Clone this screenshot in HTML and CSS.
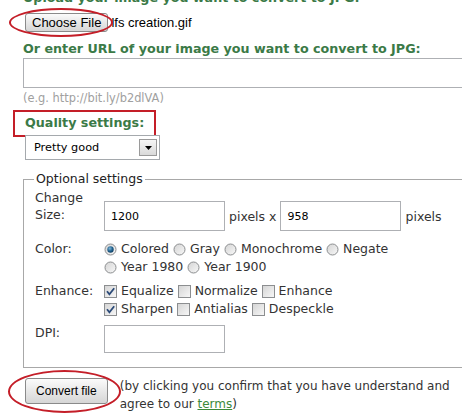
FILE: index.html
```html
<!DOCTYPE html>
<html>
<head>
<meta charset="utf-8">
<title>Convert to JPG</title>
<link rel="stylesheet" href="styles.css">
</head>
<body>
<svg class="defs" width="0" height="0" aria-hidden="true">
  <defs>
    <linearGradient id="gBox" x1="0" y1="0" x2="1" y2="1">
      <stop offset="0" stop-color="#d4d4d4"/>
      <stop offset="1" stop-color="#f8f8f8"/>
    </linearGradient>
    <radialGradient id="gDot" cx="0.4" cy="0.35" r="0.7">
      <stop offset="0" stop-color="#7fb6d8"/>
      <stop offset="0.6" stop-color="#1f5f8c"/>
      <stop offset="1" stop-color="#0f3b5c"/>
    </radialGradient>
  </defs>
</svg>
<div class="page">
  <h2 class="heading heading-upload">Upload your image you want to convert to JPG:</h2>
  <div class="file-row">
    <button class="btn btn-choose" type="button">Choose File</button><span class="file-name">lfs creation.gif</span>
    <span class="mark-ellipse mark-choose"></span>
  </div>

  <h2 class="heading heading-url">Or enter URL of your image you want to convert to JPG:</h2>
  <input class="text-input url-input" type="text">
  <div class="hint">(e.g. http://bit.ly/b2dlVA)</div>

  <h2 class="heading heading-quality">Quality settings:</h2>
  <div class="select">
    <span class="select-value">Pretty good</span>
    <span class="select-arrow"><svg width="7" height="4" viewBox="0 0 7 4"><path d="M0 0H7L3.5 4Z" fill="#000"/></svg></span>
  </div>

  <fieldset class="options">
    <legend>Optional settings</legend>

    <div class="row row-size">
      <div class="row-label label-size">Change<br>Size:</div>
      <div class="row-value size-value">
        <input class="text-input num-input" type="text" value="1200">
        <span>pixels x</span>
        <input class="text-input num-input" type="text" value="958">
        <span>pixels</span>
      </div>
    </div>

    <div class="row row-color">
      <div class="row-label">Color:</div>
      <div class="row-value opts">
        <div class="opt-line">
          <span class="opt"><svg class="ico" width="13" height="13" viewBox="0 0 13 13"><circle cx="6.5" cy="6.5" r="5.5" fill="url(#gBox)" stroke="#8c8e90"/><circle cx="6.5" cy="6.5" r="3.2" fill="url(#gDot)"/></svg>Colored</span>
          <span class="opt"><svg class="ico" width="13" height="13" viewBox="0 0 13 13"><circle cx="6.5" cy="6.5" r="5.5" fill="url(#gBox)" stroke="#8c8e90"/></svg>Gray</span>
          <span class="opt"><svg class="ico" width="13" height="13" viewBox="0 0 13 13"><circle cx="6.5" cy="6.5" r="5.5" fill="url(#gBox)" stroke="#8c8e90"/></svg>Monochrome</span>
          <span class="opt"><svg class="ico" width="13" height="13" viewBox="0 0 13 13"><circle cx="6.5" cy="6.5" r="5.5" fill="url(#gBox)" stroke="#8c8e90"/></svg>Negate</span>
        </div>
        <div class="opt-line">
          <span class="opt"><svg class="ico" width="13" height="13" viewBox="0 0 13 13"><circle cx="6.5" cy="6.5" r="5.5" fill="url(#gBox)" stroke="#8c8e90"/></svg>Year 1980</span>
          <span class="opt"><svg class="ico" width="13" height="13" viewBox="0 0 13 13"><circle cx="6.5" cy="6.5" r="5.5" fill="url(#gBox)" stroke="#8c8e90"/></svg>Year 1900</span>
        </div>
      </div>
    </div>

    <div class="row row-enhance">
      <div class="row-label">Enhance:</div>
      <div class="row-value opts">
        <div class="opt-line">
          <span class="opt"><svg class="ico" width="13" height="13" viewBox="0 0 13 13"><rect x="0.5" y="0.5" width="12" height="12" fill="url(#gBox)" stroke="#8c8e90"/><path d="M3 6.3L5.4 9.2L10.2 3.2" fill="none" stroke="#2b4a78" stroke-width="1.8"/></svg>Equalize</span>
          <span class="opt"><svg class="ico" width="13" height="13" viewBox="0 0 13 13"><rect x="0.5" y="0.5" width="12" height="12" fill="url(#gBox)" stroke="#8c8e90"/></svg>Normalize</span>
          <span class="opt"><svg class="ico" width="13" height="13" viewBox="0 0 13 13"><rect x="0.5" y="0.5" width="12" height="12" fill="url(#gBox)" stroke="#8c8e90"/></svg>Enhance</span>
        </div>
        <div class="opt-line">
          <span class="opt"><svg class="ico" width="13" height="13" viewBox="0 0 13 13"><rect x="0.5" y="0.5" width="12" height="12" fill="url(#gBox)" stroke="#8c8e90"/><path d="M3 6.3L5.4 9.2L10.2 3.2" fill="none" stroke="#2b4a78" stroke-width="1.8"/></svg>Sharpen</span>
          <span class="opt"><svg class="ico" width="13" height="13" viewBox="0 0 13 13"><rect x="0.5" y="0.5" width="12" height="12" fill="url(#gBox)" stroke="#8c8e90"/></svg>Antialias</span>
          <span class="opt"><svg class="ico" width="13" height="13" viewBox="0 0 13 13"><rect x="0.5" y="0.5" width="12" height="12" fill="url(#gBox)" stroke="#8c8e90"/></svg>Despeckle</span>
        </div>
      </div>
    </div>

    <div class="row row-dpi">
      <div class="row-label">DPI:</div>
      <div class="row-value">
        <input class="text-input num-input dpi-input" type="text">
      </div>
    </div>
  </fieldset>

  <div class="submit-row">
    <div class="btn-wrap">
      <button class="btn btn-convert" type="button">Convert file</button>
      <span class="mark-ellipse mark-convert"></span>
    </div>
    <p class="terms">(by clicking you confirm that you have understand and<br>agree to our <a href="#" class="terms-link">terms</a>)</p>
  </div>
</div>
</body>
</html>
```

FILE: styles.css
```css
html, body {
  margin: 0;
  padding: 0;
  overflow: hidden;
  background: #fff;
}

body {
  width: 462px;
  height: 414px;
  font-family: "DejaVu Sans", Verdana, sans-serif;
  color: #333;
}

.defs {
  position: absolute;
  width: 0;
  height: 0;
}

.page {
  padding-left: 23px;
}

.heading {
  margin: 0;
  font-size: 12.7px;
  line-height: 16px;
  font-weight: bold;
  color: #3b7a47;
  white-space: nowrap;
}

.heading-upload {
  margin-top: -10px;
}

.file-row {
  position: relative;
  display: flex;
  align-items: center;
  height: 19px;
  margin: 7px 0 0 2px;
}

.btn {
  margin: 0;
  font-family: "Liberation Sans", Arial, sans-serif;
  color: #000;
  border: 1px solid #8a8a8a;
  border-radius: 3px;
  background: linear-gradient(#fbfbfb, #e8e8e8 50%, #d6d6d6);
  cursor: default;
}

.btn-choose {
  height: 19px;
  padding: 0 6px;
  font-size: 13px;
  line-height: 17px;
}

.file-name {
  margin-left: 3px;
  font-family: "Liberation Sans", Arial, sans-serif;
  font-size: 13px;
  color: #000;
}

.mark-ellipse {
  position: absolute;
  border: 2px solid #c41e28;
  border-radius: 50%;
  pointer-events: none;
}

.mark-choose {
  left: -16px;
  top: -5px;
  width: 100px;
  height: 25px;
}

.heading-url {
  margin-top: 9px;
}

.text-input {
  box-sizing: border-box;
  margin: 0;
  border: 1px solid #aeb0b4;
  background: #fff;
  font-family: "DejaVu Sans", Verdana, sans-serif;
  color: #000;
  outline: none;
}

.url-input {
  display: block;
  width: 450px;
  height: 30px;
  margin-top: 1px;
}

.hint {
  margin-top: 4px;
  font-size: 11.4px;
  line-height: 13px;
  color: #a0a0a0;
}

.heading-quality {
  width: fit-content;
  margin: 5px 0 0 -10px;
  padding: 3px 10px 4px;
  border: 2px solid #c41e28;
}

.select {
  box-sizing: border-box;
  display: flex;
  align-items: center;
  width: 135px;
  height: 25px;
  margin: -2px 0 0 2px;
  padding-left: 8px;
  border: 1px solid #a5a9ad;
  background: #fff;
  font-size: 11.3px;
  color: #000;
}

.select-arrow {
  box-sizing: border-box;
  display: flex;
  align-items: center;
  justify-content: center;
  width: 18px;
  height: 17px;
  margin-left: auto;
  margin-right: 2px;
  border: 1px solid #9a9a9a;
  background: linear-gradient(#f6f6f6, #d9d9d9);
}

.options {
  box-sizing: border-box;
  width: 460px;
  margin: 11px 0 0 0;
  padding: 2px 0 14px 11px;
  border: 1px solid #a8a8a8;
  font-size: 12.5px;
}

.options legend {
  margin-left: -1px;
  padding: 0 2px;
  line-height: 16px;
  color: #222;
}

.row {
  display: flex;
  align-items: flex-start;
}

.row-label {
  flex: 0 0 69px;
  line-height: 18px;
}

.label-size {
  line-height: 17px;
}

.row-value {
  flex: 1 1 auto;
}

.size-value {
  display: flex;
  align-items: center;
  gap: 4px;
  margin-top: 12px;
}

.num-input {
  width: 121px;
  height: 30px;
  padding: 0 6px;
  font-size: 11px;
}

.row-color {
  margin-top: 9px;
}

.row-enhance,
.row-dpi {
  margin-top: 6px;
}

.opts {
  line-height: 18px;
}

.opt-line {
  display: flex;
  align-items: center;
  height: 18px;
}

.opt {
  display: inline-flex;
  align-items: center;
  gap: 4px;
  margin-right: 4px;
}

.ico {
  display: block;
  flex: 0 0 auto;
}

.dpi-input {
  display: block;
  height: 28px;
  margin-top: 1px;
}

.submit-row {
  display: flex;
  align-items: flex-start;
  margin: 10px 0 0 2px;
}

.btn-wrap {
  position: relative;
  flex: 0 0 auto;
}

.btn-convert {
  display: block;
  height: 26px;
  padding: 0 10px;
  font-size: 12px;
}

.mark-convert {
  left: -17px;
  top: -8px;
  width: 109px;
  height: 39px;
}

.terms {
  margin: -1px 0 0 12px;
  font-size: 12px;
  line-height: 18px;
  white-space: nowrap;
  color: #333;
}

.terms-link {
  color: #3b8a3a;
  text-decoration: underline;
}
```
